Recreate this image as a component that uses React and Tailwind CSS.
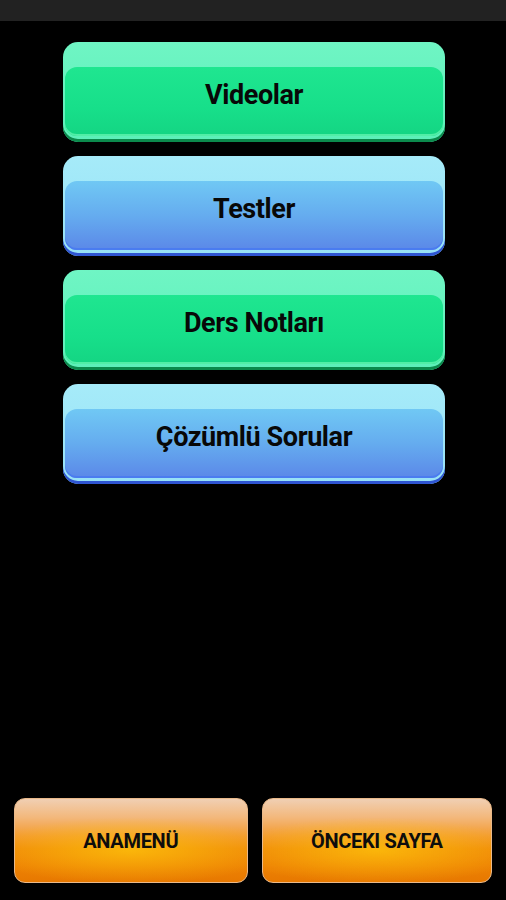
const menu = [
  { label: 'Videolar', color: 'green' },
  { label: 'Testler', color: 'blue' },
  { label: 'Ders Notları', color: 'green' },
  { label: 'Çözümlü Sorular', color: 'blue' },
];

const styles = {
  green: {
    outer: 'bg-[linear-gradient(180deg,#6ff5c4_0%,#5cefb8_100%)] shadow-[inset_0_-3px_0_#0b8a4c]',
    inner: 'bg-[linear-gradient(180deg,#1fe690_0%,#17df8a_60%,#14d583_100%)] shadow-[inset_0_-2px_0_#52eea6]',
  },
  blue: {
    outer: 'bg-[linear-gradient(180deg,#a6ebf9_0%,#97e1f6_100%)] shadow-[inset_0_-3px_0_#2f55d2]',
    inner: 'bg-[linear-gradient(180deg,#70c8f4_0%,#65acef_50%,#5b88e8_100%)] shadow-[inset_0_-2px_0_#4a7cf0]',
  },
};

function MenuButton({ label, color }) {
  const s = styles[color];
  return (
    <button className={`h-[100px] w-full rounded-[15px] pt-[25px] px-[2px] pb-[6px] flex flex-col ${s.outer}`}>
      <div className={`flex-1 rounded-[12px] pb-[13px] flex items-center justify-center ${s.inner}`}>
        <span className="font-['Roboto',sans-serif] font-bold text-[27px] text-[#080808] tracking-[-0.4px]">
          {label}
        </span>
      </div>
    </button>
  );
}

function BottomButton({ label, className }) {
  return (
    <button
      className={`h-[85px] rounded-[11px] border border-[#e9b98a] flex items-center justify-center bg-[radial-gradient(ellipse_65%_40%_at_50%_62%,rgba(255,200,10,0.7),rgba(255,190,0,0)_100%),linear-gradient(180deg,#f0cfb3_0%,#f3b87c_22%,#f39a30_45%,#f08a0a_60%,#ee8204_80%,#e77800_100%)] ${className}`}
    >
      <span className="font-['Roboto',sans-serif] font-bold text-[20px] text-[#0d0d0d] tracking-[-0.3px]">
        {label}
      </span>
    </button>
  );
}

export default function App() {
  return (
    <div className="h-[900px] w-[506px] bg-black flex flex-col overflow-hidden">
      <div className="h-[21px] bg-[#222222] shrink-0" />

      <div className="ml-[63px] w-[382px] pt-[21px] flex flex-col gap-[14px]">
        {menu.map((item) => (
          <MenuButton key={item.label} label={item.label} color={item.color} />
        ))}
      </div>

      <div className="mt-auto flex gap-[14px] px-[14px] pb-[17px]">
        <BottomButton label="ANAMENÜ" className="w-[234px]" />
        <BottomButton label="ÖNCEKI SAYFA" className="w-[231px]" />
      </div>
    </div>
  );
}
